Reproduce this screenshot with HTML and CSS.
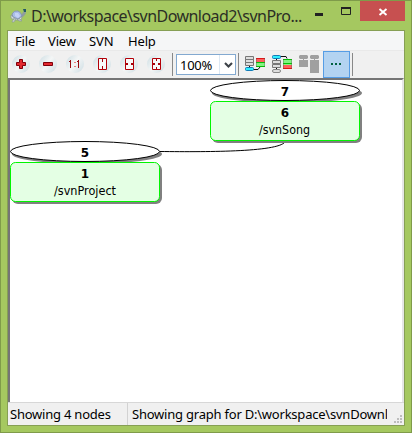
FILE: index.html
```html
<!DOCTYPE html>
<html lang="en">
<head>
<meta charset="utf-8">
<title>Revision Graph</title>
<link rel="stylesheet" href="styles.css">
</head>
<body>
<div class="window">
  <header class="titlebar">
    <svg class="turtle" width="17" height="16" viewBox="0 0 17 16">
      <path d="M11 8l2-4 2-1 1 2-2 3-3 2z" fill="#8f9c9e"/>
      <path d="M1 7l3 2 8 0-1 3-7 0-3-2zM4 10l2 1-2 3H2zM9 10l3 3h-3l-2-2z" fill="#d6ddd8" stroke="#8b9b96" stroke-width=".7"/>
      <path d="M2 6q2-4 6-3 3 1 4 5l-4 3-5-2z" fill="#a9bde8" stroke="#7d8da6" stroke-width=".8"/>
      <path d="M5 5l3 0 2 3-2 2-3-2z" fill="#c4d2f5"/>
      <path d="M13 1h3v3h-2z" fill="#235868"/>
    </svg>
    <span class="title">D:\workspace\svnDownload2\svnPro...</span>
    <svg class="winctl" width="42" height="21" viewBox="0 0 42 21">
      <path d="M0 13h8v3H0z" fill="#222"/>
      <path d="M26.500 8.500h9v6h-9z" fill="none" stroke="#222"/>
      <path d="M26 7h10v2H26z" fill="#222"/>
    </svg>
    <div class="close"><svg width="45" height="21" viewBox="0 0 45 21"><path d="M19.500 9l7 6m0-6l-7 6" stroke="#fff" stroke-width="1.900"/></svg></div>
  </header>
  <main class="client">
    <nav class="menu">
      <span class="file">File</span><span class="view">View</span><span class="svn">SVN</span><span class="help">Help</span>
    </nav>
    <div class="toolbar">
      <div class="orb"><svg width="18" height="18" viewBox="0 0 18 18"><path d="M7.500 4.500h3v3h3v3h-3v3h-3v-3h-3v-3h3z" fill="#e32a30" stroke="#80000b"/></svg></div>
      <div class="orb"><svg width="18" height="18" viewBox="0 0 18 18"><path d="M4.500 7.500h9v3h-9z" fill="#e32a30" stroke="#80000b"/></svg></div>
      <div class="orb"><svg width="18" height="18" viewBox="0 0 18 18"><path d="M3 6h1V5h1v8H4V7H3zM11 6h1V5h1v8h-1V7h-1z" fill="#980c10"/><path d="M8 7h2v1H8zM8 11h2v1H8z" fill="#e87d7d"/></svg></div>
      <div class="orb"><svg width="18" height="18" viewBox="0 0 18 18"><path d="M5.500 3.500h8v11h-8z" fill="#f8f9f9" stroke="#b40008"/><path d="M9 4h1v3H9zM9 11h1v3H9z" fill="#a40008"/></svg></div>
      <div class="orb"><svg width="18" height="18" viewBox="0 0 18 18"><path d="M5.500 3.500h8v11h-8z" fill="#f8f9f9" stroke="#b40008"/><path d="M6 8h2v2H6zM11 8h2v2h-2z" fill="#a40008"/></svg></div>
      <div class="orb"><svg width="18" height="18" viewBox="0 0 18 18"><path d="M5.500 3.500h8v11h-8z" fill="#f8f9f9" stroke="#b40008"/><path d="M9 4h1v2H9zM9 12h1v2H9zM6 8h2v2H6zM11 8h2v2h-2z" fill="#a40008"/></svg></div>
      <div class="rule first"></div>
      <div class="combo"><span>100%</span><i><svg width="16" height="20" viewBox="0 0 16 20"><path d="M5 8l3.500 3.500L12 8" fill="none" stroke="#3d4248" stroke-width="2.100"/></svg></i></div>
      <div class="rule second"></div>
      <svg class="tree" width="22" height="18" viewBox="0 0 22 18">
        <path d="M4.500 11v2M8 14.500h5l2-2.500" stroke="#111" fill="none"/>
        <path d="M.5 1.500h8v3h-8zM.5 4.500h8v3h-8zM.5 7.500h8v3h-8z" fill="#dedede" stroke="#777"/>
        <path d="M11 3h9v4h-9z" fill="#ff5d5d"/><path d="M11 3h9v1h-9z" fill="#dd1616"/>
        <path d="M11 7h9v5h-9z" fill="#82f382"/><path d="M11 7h9v1h-9zM11 11h9v1h-9z" fill="#05bd05"/>
        <path d="M11.500 3v9M19.500 3v9" stroke="#555" stroke-opacity=".35"/>
        <rect x=".5" y="12.500" width="8" height="3" rx="1" fill="#2defff" stroke="#147bb7"/>
      </svg>
      <svg class="tree" width="22" height="18" viewBox="0 0 22 18">
        <path d="M4.500 4v11M8 1.500h6l1 2" stroke="#111" fill="none"/>
        <rect x=".5" y=".5" width="8" height="3" rx="1" fill="#2defff" stroke="#147bb7"/>
        <path d="M.5 5.500h8v3h-8zM.5 9.500h8v3h-8z" fill="#dedede" stroke="#777"/><rect x=".5" y="14.500" width="8" height="3" rx="1.500" fill="#dedede" stroke="#888"/>
        <path d="M11 4h9v6h-9z" fill="#82f382"/><path d="M11 4h9v1h-9zM11 8h9v1h-9z" fill="#05bd05"/>
        <path d="M11 10h9v4h-9z" fill="#ff5d5d"/><path d="M11 13h9v1h-9z" fill="#dd1616"/>
        <path d="M11.500 4v10M19.500 4v10" stroke="#555" stroke-opacity=".35"/>
      </svg>
      <svg class="tree last" width="22" height="18" viewBox="0 0 22 18">
        <path d="M1 0h7l1 1v2L8 4H5v1h4v7H0V5h4V4H1L0 3V1zM12 0h7l1 1v2l-1 1h-3v1h4v13h-9V5h4V4h-3l-1-1V1z" fill="#a0a0a0"/>
      </svg>
      <div class="active"><svg width="25" height="25" viewBox="0 0 25 25"><path d="M7 11h2v2H7zM11 11h2v2h-2zM15 11h2v2h-2z" fill="#006040"/></svg></div>
      <div class="rule third"></div>
    </div>
    <section class="canvas">
      <svg width="392" height="322" viewBox="10 80 392 322">
        <path d="M160 151.500C210 152 282 152 285.500 141" fill="none" stroke="#000"/>
        <g fill="#808080"><ellipse cx="287" cy="93" rx="75" ry="10"/><rect x="212" y="103" width="150" height="40" rx="6"/><ellipse cx="87" cy="154" rx="75" ry="10"/><rect x="12" y="164" width="150" height="40" rx="6"/></g>
        <g fill="#fff" stroke="#000"><ellipse cx="285" cy="90.500" rx="74.500" ry="10"/><ellipse cx="85" cy="151.500" rx="74.500" ry="10"/></g>
        <g fill="#e4ffe4" stroke="#00f500"><rect x="210.500" y="101.500" width="149" height="39" rx="5"/><rect x="10.500" y="162.500" width="149" height="39" rx="5"/></g>
        <g class="revision"><text x="285" y="96">7</text><text x="285" y="117">6</text><text x="85" y="157">5</text><text x="85" y="178">1</text></g>
        <g class="path"><text x="259" y="134" textLength="51" lengthAdjust="spacingAndGlyphs">/svnSong</text><text x="54" y="195" textLength="62" lengthAdjust="spacingAndGlyphs">/svnProject</text></g>
      </svg>
    </section>
    <footer class="status">
      <span class="count">Showing 4 nodes</span>
      <span class="where">Showing graph for D:\workspace\svnDownload2</span>
      <svg class="grip" width="8" height="8" viewBox="0 0 8 8"><path d="M6 0h2v2H6zM3 3h2v2H3zM6 3h2v2H6zM0 6h2v2H0zM3 6h2v2H3zM6 6h2v2H6z" fill="#bdbdbd"/></svg>
    </footer>
  </main>
</div>
</body>
</html>
```
FILE: styles.css
```css
* { box-sizing: border-box; }
body { margin: 0; overflow: hidden; font-family: "Noto Sans", "Open Sans", sans-serif; color: #000; }
svg { display: block; flex: none; }
.window { width: 412px; height: 433px; background: #a5c860; border: 1px solid #7f9b4a; padding: 0 6px 6px; }
.titlebar { height: 29px; display: flex; align-items: flex-start; }
.turtle { margin: 7px 0 0 3px; }
.title { width: 280px; margin-left: 4px; padding-top: 4px; font-size: 16px; line-height: 22px; letter-spacing: -.54px; white-space: nowrap; color: #2b2e25; }
.winctl { margin-left: 4px; margin-top: -1px; }
.close { width: 45px; height: 20px; margin-left: 3px; background: #c75050; flex: none; }
.close svg { margin-top: -1px; }
.client { width: 398px; height: 396px; border: 1px solid #869f55; background: #f0f0f0; display: flex; flex-direction: column; }
.menu { height: 19px; background: #f5f6f7; display: flex; padding-left: 7px; font-size: 13px; line-height: 20px; letter-spacing: -.15px; }
.file { width: 33px; }
.view { width: 41px; }
.svn { width: 39px; }
.toolbar { height: 28px; border-top: 1px solid #e9e9e9; display: flex; align-items: center; padding-left: 4px; }
.orb { width: 18px; height: 18px; margin: -1px 9px 0 0; border-radius: 50%; background: linear-gradient(125deg, #ccdde3, #f4f6f6 48%, #cddde3); flex: none; }
.rule { width: 1px; height: 23px; background: #888; flex: none; }
.rule.first { margin-left: -2px; }
.combo { width: 60px; height: 21px; margin-left: 3px; background: #fff; border: 1px solid #83a9d0; display: flex; flex: none; }
.combo span { width: 42px; padding-left: 3px; font-size: 13px; line-height: 20px; letter-spacing: -.3px; }
.combo i { width: 16px; border-left: 1px solid #dce8f3; height: 19px; }
.rule.second { margin-left: 2px; }
.tree { margin: -1px -1px 0 6px; }
.tree.last { margin-right: 2px; }
.active { width: 27px; height: 27px; background: #b3d3f1; border: 1px solid #569de5; flex: none; }
.rule.third { margin-left: 2px; }
.canvas { height: 324px; background: #fff; border-top: 2px solid #757575; border-left: 2px solid #757575; border-right: 2px solid #e6e6e6; overflow: hidden; }
.status { height: 23px; border-top: 1px solid #d7d7d7; display: flex; font-size: 13px; line-height: 23px; white-space: nowrap; letter-spacing: -.22px; }
.count { width: 120px; padding-left: 2px; border-right: 1px solid #d2d2d2; }
.where { width: 259px; padding-left: 4px; overflow: hidden; }
.grip { margin: 12px 0 0 7px; }
.revision { font: bold 12px "DejaVu Sans", sans-serif; text-anchor: middle; }
.path { font: 12px "DejaVu Sans Condensed", "DejaVu Sans", sans-serif; }
```
